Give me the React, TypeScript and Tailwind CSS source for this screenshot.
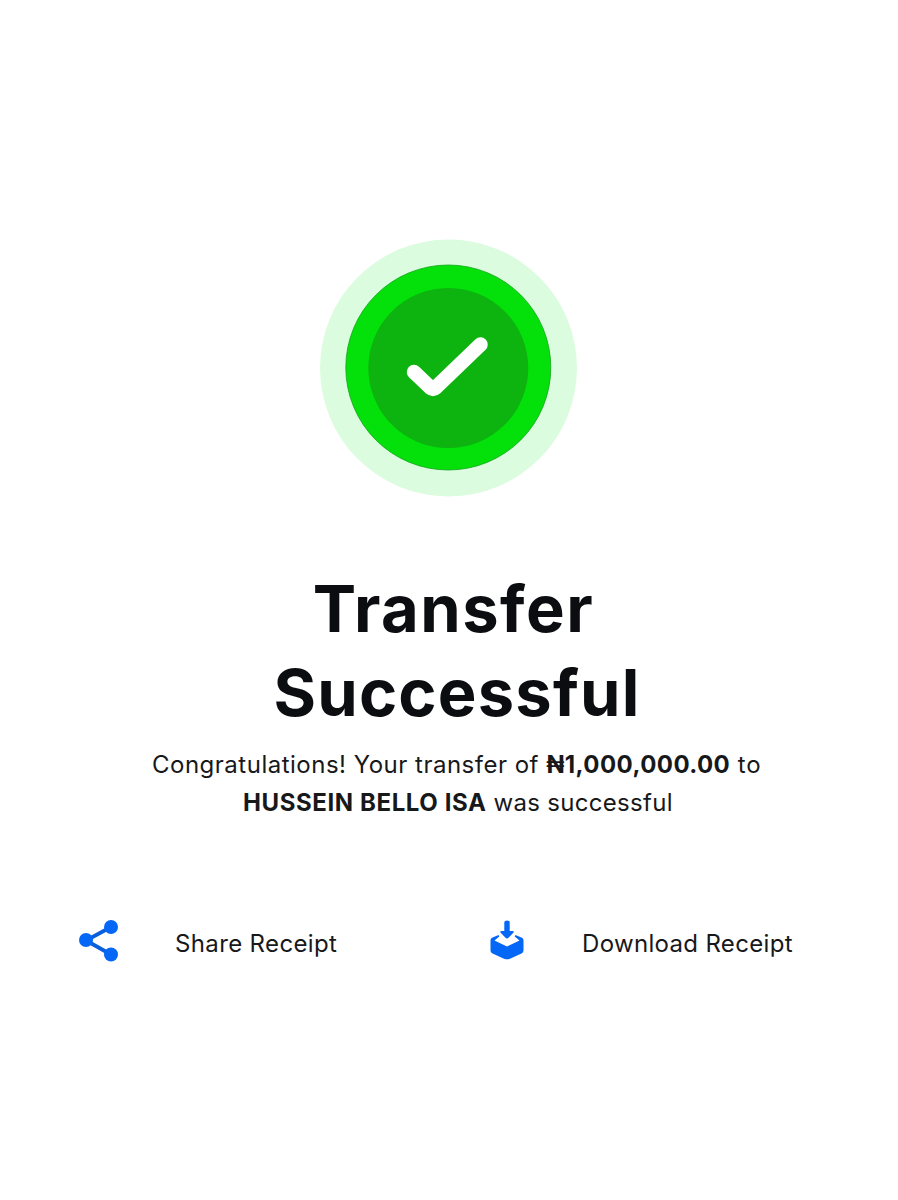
const SuccessBadge = () => (
  <svg viewBox="0 0 258 258" className="ml-[319px] block size-[258px]" fill="none">
    <circle cx="129.5" cy="129" r="128.5" fill="#dcfcdf" />
    <circle cx="129.3" cy="128.5" r="102.5" fill="#04e009" stroke="#12a51c" strokeWidth="0.8" />
    <circle cx="129.3" cy="129" r="80" fill="#0db30f" />
    <path
      d="M95 133 L111.5 148.8 Q114 151 116.5 148.8 L161.5 105.5"
      stroke="#fff"
      strokeWidth="14.5"
      strokeLinecap="round"
      strokeLinejoin="round"
    />
  </svg>
);

const ShareIcon = () => (
  <svg viewBox="0 0 40 42" className="h-[42px] w-10 shrink-0" fill="#0567f5">
    <path d="M32 7 L7 20.5 L32 34.5" fill="none" stroke="#0a60dc" strokeWidth="3.8" />
    <circle cx="32" cy="7" r="7" />
    <circle cx="7" cy="20" r="7" />
    <circle cx="32" cy="34.5" r="7" />
  </svg>
);

const DownloadIcon = () => (
  <svg viewBox="0 0 34 40" className="h-10 w-[34px] shrink-0" fill="#0567f5">
    <path d="M14.3 2.2 Q14.3 0.5 17 0.5 Q19.7 0.5 19.7 2.2 V11 H22 Q24.8 11 23.3 12.8 L18.5 17.8 Q17 19 15.5 17.8 L10.7 12.8 Q9.2 11 12 11 H14.3 Z" />
    <path d="M8.5 15 L2 17.7 Q0.5 18.5 0.5 20.5 V30.5 Q0.5 32.3 2 33.2 L14 38.7 Q17 39.9 20 38.7 L32 33.2 Q33.5 32.3 33.5 30.5 V20.5 Q33.5 18.5 32 17.7 L25.5 15 L24.7 16.6 L29.5 20.6 L17 26.5 L4.5 20.6 L9.3 16.6 Z" />
  </svg>
);

export default function App() {
  return (
    <main className="h-[1200px] w-[898px] overflow-hidden bg-white pt-[239px] font-['Inter',sans-serif] text-[#17181a]">
      <SuccessBadge />

      <h1 className="mt-[70px] pl-[9px] text-center text-[65px] leading-[84px] font-bold text-[#0b0d10]">
        <span className="block tracking-[1.5px]">Transfer</span>
        <span className="block pl-[7px] tracking-[1.2px]">Successful</span>
      </h1>

      <p className="mt-[11px] text-[24px] leading-[38px] whitespace-nowrap">
        <span className="block pl-[152px]">
          <span className="tracking-[0.5px]">Congratulations! Your transfer of </span>
          <strong className="font-bold tracking-[0.42px]">₦1,000,000.00</strong>
          <span className="tracking-[0.8px]"> to</span>
        </span>
        <span className="block pl-[243px]">
          <strong className="font-bold tracking-[0.6px]">HUSSEIN BELLO ISA</strong>
          <span className="tracking-[0.3px]"> was successful</span>
        </span>
      </p>

      <div className="mt-[98px] flex items-start pl-[79px] text-[24px] leading-[48px] whitespace-nowrap">
        <button className="flex w-[411px] items-start gap-[56px]">
          <ShareIcon />
          <span className="tracking-[0.36px]">Share Receipt</span>
        </button>
        <button className="flex items-start gap-[58px]">
          <DownloadIcon />
          <span className="tracking-[0.33px]">Download Receipt</span>
        </button>
      </div>
    </main>
  );
}
